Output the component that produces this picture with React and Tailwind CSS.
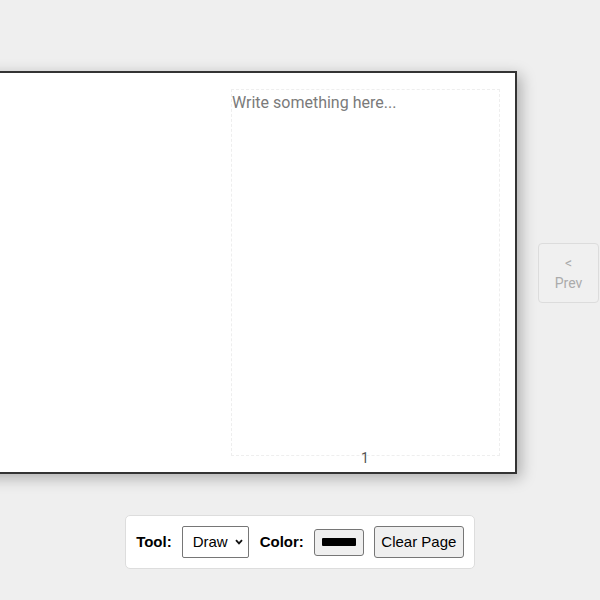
import React from 'react';

const App = () => {
  const [tool, setTool] = React.useState('draw');
  const [text, setText] = React.useState('');

  return (
    <div className="min-h-screen bg-[#efefef] overflow-hidden font-['Roboto',sans-serif] text-[#222]">
      {/* Book + page nav */}
      <div className="flex items-center justify-end pt-[71px] pr-[1px]">
        <div className="shrink-0 flex bg-white border-2 border-[#333] shadow-[4px_4px_14px_rgba(0,0,0,0.28)]">
          {/* Left page (blank canvas) */}
          <div className="w-[300px] h-[399px]" />
          {/* Right page */}
          <div className="relative w-[300px] h-[399px] p-[16px] pr-[15px]">
            <textarea
              value={text}
              onChange={e => setText(e.target.value)}
              placeholder="Write something here..."
              className="block w-full h-full resize-none p-0 pt-[2px] border border-dashed border-[#eeeeee] text-[16px] leading-[22px] outline-none placeholder:text-[#7a7a7a]"
            />
            <span className="absolute left-0 right-0 bottom-[6px] text-center text-[14px] leading-[16px] text-[#555]">1</span>
          </div>
        </div>

        <button
          disabled
          className="shrink-0 ml-[21px] w-[61px] h-[60px] flex flex-col items-center justify-center border border-[#dcdcdc] rounded-[4px] bg-[#f0f0f0] text-[14px] leading-[20px] text-[#ababab]"
        >
          <span>&lt;</span>
          <span>Prev</span>
        </button>
      </div>

      {/* Toolbar */}
      <div className="flex justify-center mt-[41px]">
        <div className="flex items-center gap-[10px] h-[54px] pl-[10px] pr-[10px] bg-white border border-[#dddddd] rounded-[5px] text-[15px] font-['Liberation_Sans',Arial,sans-serif] text-black">
          <label className="font-bold pt-[1px]">Tool:</label>
          <div className="relative">
            <select
              value={tool}
              onChange={e => setTool(e.target.value)}
              className="block appearance-none h-[32px] w-[67px] pl-[10px] border border-[#767676] rounded-[2px] bg-white text-[15px]"
            >
              <option value="draw">Draw</option>
              <option value="erase">Erase</option>
            </select>
            <svg
              className="absolute right-[6px] top-[13px] pointer-events-none"
              width="8"
              height="6"
              viewBox="0 0 8 6"
            >
              <path d="M1 1.2 L4 4.4 L7 1.2" fill="none" stroke="#111" strokeWidth="1.8" />
            </svg>
          </div>
          <label className="font-bold ml-[1px] pt-[1px]">Color:</label>
          <button className="w-[50px] h-[27px] flex items-center justify-center border border-[#767676] rounded-[3px] bg-[#efefef]">
            <span className="block w-[34px] h-[8px] rounded-[1px] bg-black" />
          </button>
          <button className="h-[32px] w-[90px] border border-[#767676] rounded-[3px] bg-[#efefef] text-[15px]">
            Clear Page
          </button>
        </div>
      </div>
    </div>
  );
};

export default App;
